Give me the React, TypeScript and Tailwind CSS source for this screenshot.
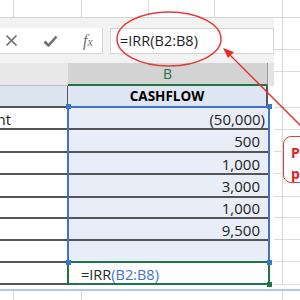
import React from "react";

type Row = {
  h: string;
  a?: string;
  b?: string;
  kind?: "head" | "neg" | "pos" | "formula" | "empty";
};

const rows: Row[] = [
  { h: "h-[22px]", b: "CASHFLOW", kind: "head" },
  { h: "h-[22px]", a: "Investment", b: "(50,000)", kind: "neg" },
  { h: "h-[23px]", b: "500", kind: "pos" },
  { h: "h-[22px]", b: "1,000", kind: "pos" },
  { h: "h-[23px]", b: "3,000", kind: "pos" },
  { h: "h-[21px]", b: "1,000", kind: "pos" },
  { h: "h-[22px]", b: "9,500", kind: "pos" },
  { h: "h-[22px]", kind: "empty" },
  { h: "h-[22px]", kind: "formula" },
];

const bgRows = [
  "h-[32px]",
  "h-[22px]",
  "h-[36px]",
  "h-[22px]",
  "h-[22px]",
  "h-[22px]",
  "h-[23px]",
  "h-[21px]",
  "h-[22px]",
  "h-[22px]",
  "h-[23px]",
];

function Cell({ r }: { r: Row }) {
  if (r.kind === "head") {
    return (
      <div className={`flex ${r.h}`}>
        <div className="w-[68px] bg-[#dde4f1] border-b-2 border-r border-[#555]" />
        <div className="w-[200px] bg-[#dfe6f3] border-b-2 border-r-2 border-[#555] flex items-center justify-center pt-[1px] font-bold text-[13.5px] text-black">
          {r.b}
        </div>
        <div className="w-[6px] bg-white" />
      </div>
    );
  }
  return (
    <div className={`flex ${r.h}`}>
      <div className="w-[68px] bg-white border-b-2 border-[#555] flex items-center pt-[2px] overflow-hidden">
        {r.a && (
          <div className="w-[11px] overflow-hidden flex justify-end">
            <span className="whitespace-nowrap text-[15px] text-[#222]">{r.a}</span>
          </div>
        )}
      </div>
      {r.kind === "formula" ? (
        <div className="w-[200px] bg-white flex items-center pl-[13px] pt-[2px] text-[14.5px] whitespace-nowrap">
          <span className="text-[#262626]">=IRR</span>
          <span className="text-[#4472c4]">(B2:B8)</span>
        </div>
      ) : (
        <div
          className={`w-[200px] bg-[#e8edf7] border-b-2 border-[#555] flex items-center justify-end pt-[2px] text-[15px] text-[#222] ${
            r.kind === "neg" ? "pr-[3px]" : "pr-[8px]"
          }`}
        >
          {r.b}
        </div>
      )}
      <div className="w-[6px] bg-white" />
    </div>
  );
}

export default function App() {
  return (
    <div className="relative w-[300px] h-[300px] overflow-hidden bg-white font-['Open_Sans',sans-serif]">
      {/* top background grid row */}
      <div className="flex h-[18px] border-b border-[#d4d4d4]">
        <div className="w-[14px] border-r border-[#dadada]" />
        <div className="w-[68px] border-r border-[#dadada]" />
        <div className="w-[67px] border-r border-[#dadada]" />
        <div className="w-[66px] border-r border-[#dadada]" />
        <div className="w-[68px] border-r border-[#dadada]" />
        <div className="flex-1" />
      </div>

      <div className="flex">
        {/* pasted excel screenshot */}
        <div className="w-[274px] flex flex-col">
          {/* formula bar */}
          <div className="h-[45px] bg-[#f2f2f2] flex items-start pt-[10px] gap-[7px]">
            <div className="w-[103px] h-[26px] bg-white border-r border-b border-[#d6d6d6] flex items-center">
              <div className="w-[22px] flex justify-center">
                <svg width="11" height="11" viewBox="0 0 11 11">
                  <path d="M1 1 L10 10 M10 1 L1 10" stroke="#6f6f6f" strokeWidth="1.7" strokeLinecap="round" />
                </svg>
              </div>
              <div className="w-[56px] flex justify-center">
                <svg width="15" height="12" viewBox="0 0 15 12">
                  <path d="M1.5 6.5 L5.5 10.5 L13.5 1.5" stroke="#6f6f6f" strokeWidth="2.6" fill="none" strokeLinejoin="round" />
                </svg>
              </div>
              <div className="w-[20px] flex justify-center">
                <span className="italic font-['Liberation_Serif',serif] text-[16px] leading-none text-[#6f6f6f]">
                  f<span className="text-[12px]">x</span>
                </span>
              </div>
            </div>
            <div className="flex-1 h-[26px] bg-white border border-[#d4d4d4] flex items-center pl-[9px] text-[14.5px] text-[#1f1f1f] whitespace-nowrap">
              =IRR(B2:B8)
            </div>
          </div>

          {/* column headers */}
          <div className="flex h-[23px]">
            <div className="w-[68px] bg-[#e8e8e8] border-b border-[#bdbdbd]" />
            <div className="w-[200px] bg-[#d3d3d3] border-b-2 border-[#217346] border-r border-r-[#9a9a9a] flex items-center justify-center text-[14px] text-[#217346]">
              B
            </div>
            <div className="w-[6px] bg-[#e4e4e4]" />
          </div>

          {/* rows */}
          {rows.map((r, i) => (
            <Cell key={i} r={r} />
          ))}
        </div>

        {/* background worksheet to the right */}
        <div className="flex-1 flex flex-col">
          {bgRows.map((h, i) => (
            <div key={i} className={`${h} flex border-b border-[#dcdcdc]`}>
              <div className="w-[9px] border-r border-[#d6d6d6]" />
              <div className="flex-1" />
            </div>
          ))}
        </div>
      </div>

      {/* bottom strip */}
      <div className="h-[4px]" />
      <div className="h-[2px] bg-[#b3c8e8]" />
      <div className="flex h-[9px]">
        <div className="w-[14px] border-r border-[#dadada]" />
        <div className="w-[68px] border-r border-[#dadada]" />
        <div className="w-[67px]" />
        <div className="w-[66px]" />
        <div className="w-[68px] border-r border-[#dadada]" />
        <div className="flex-1" />
      </div>

      {/* selection overlays */}
      <div className="absolute left-[67px] top-[106px] w-[203px] h-[157px] border-2 border-[#3d73c9]" />
      <div className="absolute left-[67px] top-[261px] w-[203px] h-[24px] border-2 border-[#217346]" />
      <div className="absolute left-[66px] top-[104px] w-[5px] h-[5px] bg-[#3d73c9]" />
      <div className="absolute left-[267px] top-[104px] w-[5px] h-[5px] bg-[#3d73c9]" />
      <div className="absolute left-[66px] top-[260px] w-[5px] h-[5px] bg-[#3d73c9]" />
      <div className="absolute left-[267px] top-[260px] w-[5px] h-[5px] bg-[#3d73c9]" />
      <div className="absolute left-[267px] top-[282px] w-[5px] h-[5px] bg-[#217346]" />

      {/* annotations */}
      <svg className="absolute left-0 top-0 pointer-events-none" width="300" height="300" viewBox="0 0 300 300">
        <ellipse cx="169" cy="39" rx="52" ry="27" fill="none" stroke="#e23b3b" strokeWidth="1.5" />
        <line x1="229" y1="54" x2="312" y2="137" stroke="#ec2a2a" strokeWidth="1.3" />
        <polygon points="223,48 234,52 228,58" fill="#ec2a2a" />
      </svg>

      <div className="absolute left-[283px] top-[136px] w-[60px] h-[47px] rounded-[8px] border-[1.5px] border-[#e23b3b] bg-white pl-[7px] pt-[5px] text-[14px] leading-[21px] font-bold text-[#e52020] whitespace-nowrap">
        <div>Place the</div>
        <div>press</div>
      </div>
    </div>
  );
}
